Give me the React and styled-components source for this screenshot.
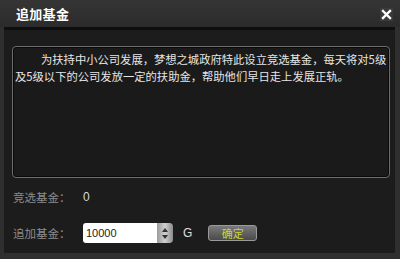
import React from "react";
import styled, { createGlobalStyle } from "styled-components";

const Global = createGlobalStyle`
  html, body { margin: 0; padding: 0; background: #2c2c2c; }
  body { font-family: "Noto Sans CJK SC", "Liberation Sans", sans-serif; }
`;

const Window = styled.div`
  width: 400px;
  height: 259px;
  box-sizing: border-box;
  background: #2f2f2f;
  display: flex;
  flex-direction: column;
  overflow: hidden;
`;

const TitleBar = styled.div`
  height: 27px;
  flex: none;
  display: flex;
  align-items: center;
  justify-content: space-between;
  padding: 0 7px 0 16px;
  background: linear-gradient(#353535, #2b2b2b);
`;

const Title = styled.div`
  color: #ffffff;
  font-size: 13px;
  font-weight: bold;
  letter-spacing: 0.3px;
  line-height: 14px;
  margin-top: 1px;
`;

const Close = styled.div`
  width: 13px;
  height: 13px;
  display: flex;
  align-items: center;
  justify-content: center;
  background: #3a3a3a;
  margin-top: 1px;
`;

const Body = styled.div`
  flex: 1;
  margin: 0 5px 6px 4px;
  background: #1c1c1c;
  border-top: 3px solid #0e0e0e;
  padding: 16px 5px 0 8px;
  display: flex;
  flex-direction: column;
`;

const TextBox = styled.div`
  height: 126px;
  border: 1px solid #6c6c6c;
  border-radius: 4px;
  box-shadow: inset 0 0 0 1px #0a0a0a;
  background: #1a1a1a;
  padding: 4px 2px 0 2px;
  color: #e6e6e6;
  font-size: 11.3px;
  line-height: 17px;
`;

const Line = styled.div`
  white-space: nowrap;
  padding-left: ${(p) => (p.$indent ? "26px" : "0")};
`;

const Row = styled.div`
  display: flex;
  align-items: center;
  height: 20px;
  margin-top: ${(p) => p.$top}px;
`;

const Label = styled.div`
  width: 70px;
  padding-left: 1px;
  color: #8c8c8c;
  font-size: 11.5px;
`;

const Value = styled.div`
  color: #d8d8d8;
  font-size: 12px;
  font-family: "Liberation Sans", sans-serif;
`;

const Spin = styled.div`
  display: flex;
  width: 90px;
  height: 20px;
  border-radius: 3px;
  overflow: hidden;
`;

const Field = styled.div`
  flex: 1;
  background: #ffffff;
  color: #222;
  font-family: "Liberation Sans", sans-serif;
  font-size: 11px;
  display: flex;
  align-items: center;
  padding-left: 3px;
`;

const Arrows = styled.div`
  width: 16px;
  background: linear-gradient(90deg, #9a9a9a, #d0d0d0 50%, #8a8a8a);
  display: flex;
  flex-direction: column;
  align-items: center;
  justify-content: space-around;
  padding: 3px 0;
  box-sizing: border-box;
  border-radius: 0 3px 3px 0;
`;

const Unit = styled.div`
  color: #e0e0e0;
  font-family: "Liberation Sans", sans-serif;
  font-size: 12px;
  margin-left: 10px;
`;

const Button = styled.div`
  margin-left: 16px;
  width: 47px;
  height: 14px;
  border: 1px solid #9a9a9a;
  border-radius: 3px;
  background: linear-gradient(#7a7a7a, #4a4a4a);
  color: #c9d43a;
  font-size: 11px;
  display: flex;
  align-items: center;
  justify-content: center;
  line-height: 1;
`;

export default function App() {
  return (
    <>
      <Global />
      <Window>
        <TitleBar>
          <Title>追加基金</Title>
          <Close>
            <svg width="11" height="11" viewBox="0 0 11 11">
              <path d="M2 2 L9 9 M9 2 L2 9" stroke="#fff" strokeWidth="2.4" strokeLinecap="square" />
            </svg>
          </Close>
        </TitleBar>
        <Body>
          <TextBox>
            <Line $indent>为扶持中小公司发展，梦想之城政府特此设立竞选基金，每天将对5级</Line>
            <Line>及5级以下的公司发放一定的扶助金，帮助他们早日走上发展正轨。</Line>
          </TextBox>
          <Row $top={9}>
            <Label>竞选基金：</Label>
            <Value>0</Value>
          </Row>
          <Row $top={16}>
            <Label>追加基金：</Label>
            <Spin>
              <Field>10000</Field>
              <Arrows>
                <svg width="6" height="4" viewBox="0 0 6 4"><path d="M0 4 L3 0 L6 4Z" fill="#333" /></svg>
                <svg width="6" height="4" viewBox="0 0 6 4"><path d="M0 0 L3 4 L6 0Z" fill="#333" /></svg>
              </Arrows>
            </Spin>
            <Unit>G</Unit>
            <Button>确定</Button>
          </Row>
        </Body>
      </Window>
    </>
  );
}
